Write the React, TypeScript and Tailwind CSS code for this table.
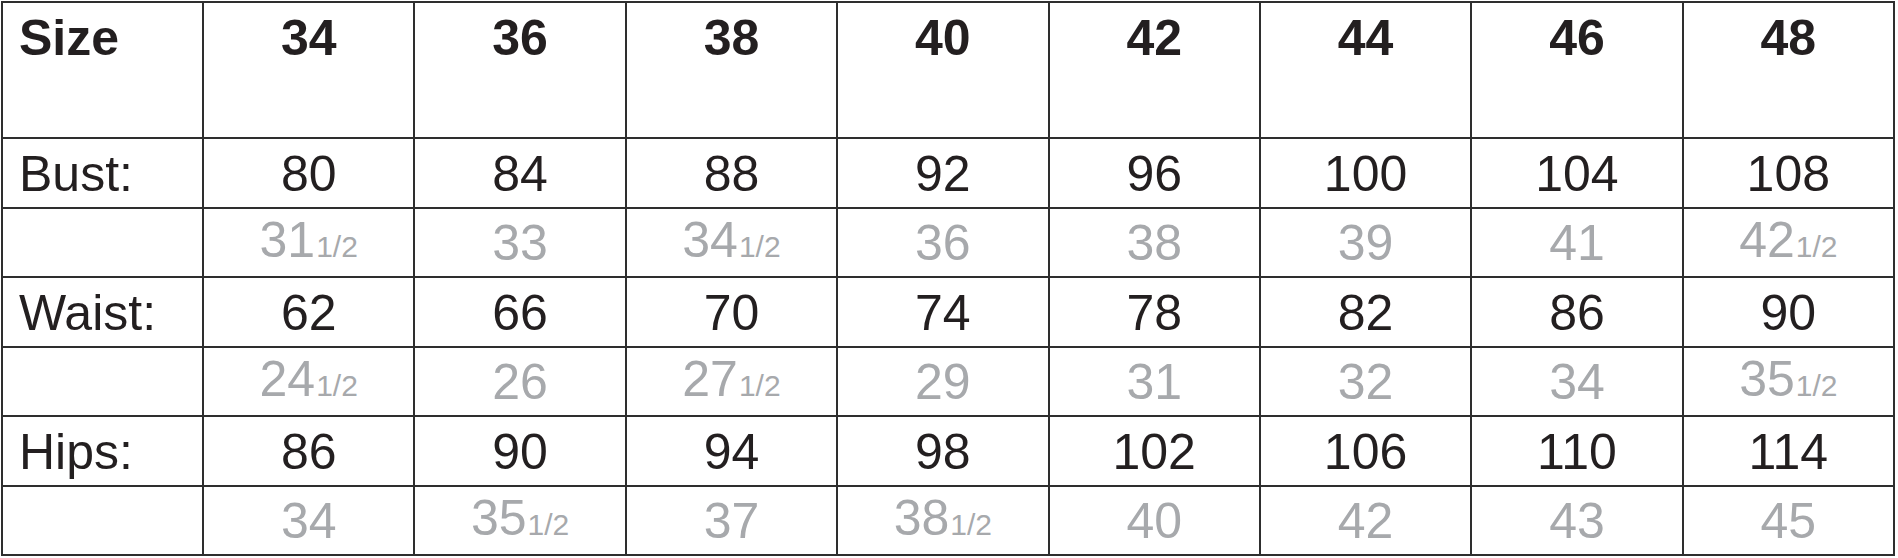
import React from "react";

type Cell = [string, boolean?];

const sizes = ["34", "36", "38", "40", "42", "44", "46", "48"];

// [label, cm values, inch values] — "true" marks a half inch
const rows: { label: string; cm: string[]; inch: Cell[] }[] = [
  {
    label: "Bust:",
    cm: ["80", "84", "88", "92", "96", "100", "104", "108"],
    inch: [["31", true], ["33"], ["34", true], ["36"], ["38"], ["39"], ["41"], ["42", true]],
  },
  {
    label: "Waist:",
    cm: ["62", "66", "70", "74", "78", "82", "86", "90"],
    inch: [["24", true], ["26"], ["27", true], ["29"], ["31"], ["32"], ["34"], ["35", true]],
  },
  {
    label: "Hips:",
    cm: ["86", "90", "94", "98", "102", "106", "110", "114"],
    inch: [["34"], ["35", true], ["37"], ["38", true], ["40"], ["42"], ["43"], ["45"]],
  },
];

const cellBorder = "border-2 border-[#2e2e2e]";

export default function App() {
  return (
    <div className="bg-white w-[1898px] h-[558px] pt-px pl-px font-['Liberation_Sans',Arial,sans-serif] text-[#231f20]">
      <table className="table-fixed border-collapse w-[1894px]">
        <colgroup>
          <col className="w-[201px]" />
          {sizes.map((s) => (
            <col key={s} />
          ))}
        </colgroup>
        <tbody>
          {/* Header */}
          <tr className="h-[136px]">
            <td className={`${cellBorder} align-top pl-[16px] pt-[7px] text-[50px] leading-[56px] font-bold`}>
              Size
            </td>
            {sizes.map((s) => (
              <td
                key={s}
                className={`${cellBorder} align-top pt-[7px] text-center text-[50px] leading-[56px] font-bold`}
              >
                {s}
              </td>
            ))}
          </tr>

          {rows.map((r) => (
            <React.Fragment key={r.label}>
              <tr className="h-[69.5px]">
                <td className={`${cellBorder} pl-[16px] text-[50px] leading-[56px] pt-[2px]`}>{r.label}</td>
                {r.cm.map((v, i) => (
                  <td key={i} className={`${cellBorder} text-center text-[50px] leading-[56px] pt-[2px]`}>
                    {v}
                  </td>
                ))}
              </tr>
              <tr className="h-[69.5px]">
                <td className={cellBorder}></td>
                {r.inch.map(([v, half], i) => (
                  <td
                    key={i}
                    className={`${cellBorder} text-center text-[50px] leading-[56px] pt-[2px] text-[#a7a9ac]`}
                  >
                    {v}
                    {half && <span className="text-[30px] ml-[1px]">1/2</span>}
                  </td>
                ))}
              </tr>
            </React.Fragment>
          ))}
        </tbody>
      </table>
    </div>
  );
}
